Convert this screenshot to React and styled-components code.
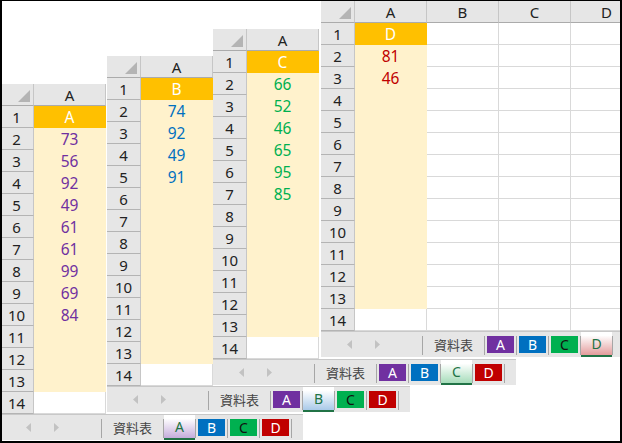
import styled, { createGlobalStyle } from 'styled-components';

const GlobalStyle = createGlobalStyle`
  html, body { margin: 0; padding: 0; background: #fff; }
  body { font-family: "Noto Sans", "Liberation Sans", sans-serif; }
`;

const Frame = styled.div`
  position: relative;
  width: 622px;
  height: 443px;
  box-sizing: border-box;
  border: 2px solid #000;
  border-top-width: 1px;
  overflow: hidden;
  background: #fff;
`;

// windows cascade on the desktop, so each one sits at its own spot
const Window = styled.div`
  position: absolute;
  left: ${p => p.$x}px;
  top: ${p => p.$y}px;
  width: 303px;
  display: flex;
  flex-direction: column;
  background: #fff;
  overflow: hidden;
`;

const Sheet = styled.div`
  display: grid;
  grid-template-columns: 34px repeat(${p => p.$cols}, 72px);
  grid-auto-rows: 22px;
  height: 330px;
`;

const Corner = styled.div`
  background: #e6e6e6;
  border-right: 1px solid #c6c6c6;
  border-bottom: 1px solid #ababab;
  display: flex;
  justify-content: flex-end;
  align-items: flex-end;
  padding: 0 3px 3px 0;
`;

const ColHead = styled.div`
  background: #e6e6e6;
  border-right: 1px solid #c6c6c6;
  border-bottom: 1px solid #ababab;
  display: flex;
  align-items: center;
  justify-content: center;
  font-size: 15px;
  color: #222;
`;

const RowHead = styled.div`
  background: #e6e6e6;
  border-right: 1px solid #c6c6c6;
  border-bottom: 1px solid #b4b4b4;
  display: flex;
  align-items: center;
  justify-content: center;
  font-size: 15px;
  color: #222;
`;

const tones = {
  title: '#ffc000',
  fill: '#fff2cc',
  plain: '#fff',
};

const Cell = styled.div`
  background: ${p => tones[p.$tone]};
  border-right: 1px solid ${p => (p.$tone === 'plain' ? '#d9d9d9' : 'transparent')};
  border-bottom: 1px solid ${p => (p.$tone === 'plain' ? '#d9d9d9' : 'transparent')};
  display: flex;
  align-items: center;
  justify-content: center;
  font-size: 15.5px;
  color: ${p => (p.$tone === 'title' ? '#fff' : p.$ink)};
`;

const TabBar = styled.div`
  height: 26px;
  box-sizing: border-box;
  display: flex;
  align-items: center;
  background: #e6e6e6;
  border-top: 1px solid #c8c8c8;
`;

const Nav = styled.div`
  width: 101px;
  box-sizing: border-box;
  padding-left: 26px;
  display: flex;
  align-items: center;
  gap: 23px;
`;

const Divider = styled.span`
  width: 1px;
  height: 19px;
  align-self: flex-end;
  margin-bottom: 2px;
  background: #a6a6a6;
`;

const SheetName = styled.span`
  width: 61px;
  text-align: center;
  font-family: "Noto Sans CJK TC", "Noto Sans", sans-serif;
  font-size: 13px;
  color: #444;
`;

const Tab = styled.span`
  width: 27px;
  height: 17px;
  margin: 0 2px;
  display: flex;
  align-items: center;
  justify-content: center;
  background: ${p => p.$bg};
  color: ${p => p.$ink};
  font-size: 14px;
`;

const ActiveTab = styled.span`
  width: 31px;
  align-self: stretch;
  box-sizing: border-box;
  display: flex;
  align-items: center;
  justify-content: center;
  background: linear-gradient(to bottom, #ffffff 15%, ${p => p.$tint});
  border-bottom: 2px solid #217346;
  color: #217346;
  font-size: 14px;
`;

const tabs = [
  { id: 'A', bg: '#7030a0', ink: '#fff', tint: '#c4acdb' },
  { id: 'B', bg: '#0070c0', ink: '#fff', tint: '#a9c9e8' },
  { id: 'C', bg: '#00b050', ink: '#111', tint: '#a6dcba' },
  { id: 'D', bg: '#c00000', ink: '#fff', tint: '#e39c9c' },
];

// lower windows only show column A, the rest is covered by the next window
const windows = [
  { id: 'A', ink: '#7030a0', x: -2, y: 83, cols: 1, values: [73, 56, 92, 49, 61, 61, 99, 69, 84] },
  { id: 'B', ink: '#0070c0', x: 105, y: 55, cols: 1, values: [74, 92, 49, 91] },
  { id: 'C', ink: '#00b050', x: 211, y: 28, cols: 1, values: [66, 52, 46, 65, 95, 85] },
  { id: 'D', ink: '#c00000', x: 319, y: 0, cols: 4, values: [81, 46] },
];

const letters = ['A', 'B', 'C', 'D'];
const rows = Array.from({ length: 14 }, (_, i) => i + 1);

const Arrow = ({ flip }) => (
  <svg width="5" height="9" viewBox="0 0 5 9">
    <polygon points={flip ? '0,0 5,4.5 0,9' : '5,0 0,4.5 5,9'} fill="#c2c2c2" />
  </svg>
);

const SpreadWindow = ({ win }) => {
  const cols = letters.slice(0, win.cols);
  return (
    <Window $x={win.x} $y={win.y}>
      <Sheet $cols={win.cols}>
        <Corner>
          <svg width="12" height="12" viewBox="0 0 12 12">
            <polygon points="12,0 12,12 0,12" fill="#b4b4b4" />
          </svg>
        </Corner>
        {cols.map(c => <ColHead key={c}>{c}</ColHead>)}
        {rows.map(r => {
          const tone = r === 1 ? 'title' : r < 14 ? 'fill' : 'plain';
          const text = r === 1 ? win.id : win.values[r - 2];
          return [
            <RowHead key={`h${r}`}>{r}</RowHead>,
            ...cols.map(c =>
              c === 'A'
                ? <Cell key={`a${r}`} $tone={tone} $ink={win.ink}>{text}</Cell>
                : <Cell key={`${c}${r}`} $tone="plain" />
            ),
          ];
        })}
      </Sheet>
      <TabBar>
        <Nav>
          <Arrow />
          <Arrow flip />
        </Nav>
        <Divider />
        <SheetName>資料表</SheetName>
        <Divider />
        {tabs.map(t => [
          t.id === win.id
            ? <ActiveTab key={t.id} $tint={t.tint}>{t.id}</ActiveTab>
            : <Tab key={t.id} $bg={t.bg} $ink={t.ink}>{t.id}</Tab>,
          <Divider key={`s${t.id}`} />,
        ])}
      </TabBar>
    </Window>
  );
};

export default function App() {
  return (
    <>
      <GlobalStyle />
      <Frame>
        {windows.map(w => <SpreadWindow key={w.id} win={w} />)}
      </Frame>
    </>
  );
}
